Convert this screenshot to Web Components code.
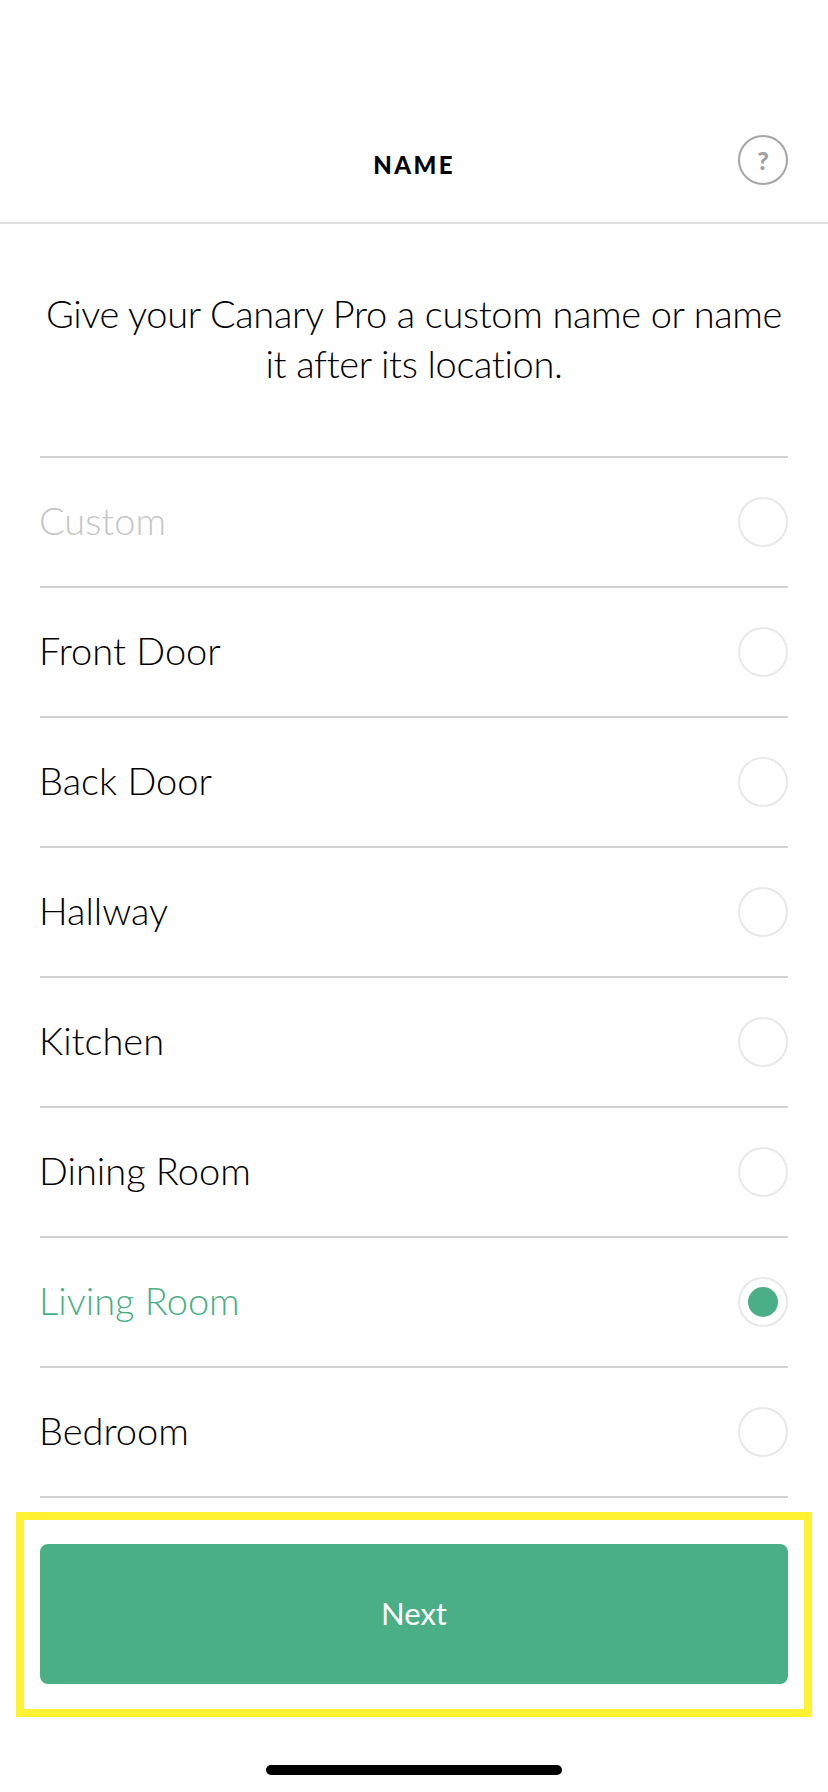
<!DOCTYPE html>
<html>
  <head>
    <meta charset="UTF-8" />
    <title>Name</title>
    <style>
      html, body { margin: 0; padding: 0; background: #fefefe; }
      body { font-family: "Lato", "Liberation Sans", sans-serif; color: #000; }
    </style>
    <script>
      // Barra superior con titulo y boton de ayuda
      class NameHeader extends HTMLElement {
        constructor() {
          super();
          const shadowRoot = this.attachShadow({ mode: "open" });
          shadowRoot.innerHTML = `
          <style>
            :host { display: block; }
            .bar {
              box-sizing: border-box;
              height: 224px;
              padding: 135px 40px 0 40px;
              display: grid;
              grid-template-columns: 50px 1fr 50px;
              align-items: start;
              border-bottom: 2px solid #e0e0e0;
            }
            h1 {
              grid-column: 2;
              margin: 5px 0 0 0;
              text-align: center;
              font: 900 24px/50px "Lato", sans-serif;
              letter-spacing: 2.4px;
              color: #000;
            }
            .help {
              box-sizing: border-box;
              width: 50px;
              height: 50px;
              border: 2px solid #a5a5a5;
              border-radius: 50%;
              display: flex;
              align-items: center;
              justify-content: center;
              font: 900 25px/1 "Lato", sans-serif;
              color: #a0a0a0;
            }
          </style>
          <div class="bar">
            <h1><slot></slot></h1>
            <div class="help">?</div>
          </div>`;
        }
      }
      customElements.define("name-header", NameHeader);

      // Una fila de la lista con su radio
      class NameOption extends HTMLElement {
        constructor() {
          super();
          const shadowRoot = this.attachShadow({ mode: "open" });
          shadowRoot.innerHTML = `
          <style>
            :host {
              display: flex;
              box-sizing: border-box;
              height: 130px;
              align-items: center;
              justify-content: space-between;
              border-bottom: 2px solid #d2d2d2;
              font: 300 38px/1 "Lato", sans-serif;
              color: #000;
            }
            :host([placeholder]) { color: #c6c6c6; }
            :host([selected]) { color: #4aaf86; }
            span { margin: 0 0 4px -1px; }
            .radio {
              box-sizing: border-box;
              width: 50px;
              height: 50px;
              border: 2px solid #e8e8e8;
              border-radius: 50%;
              display: flex;
              align-items: center;
              justify-content: center;
            }
            :host([selected]) .radio::after {
              content: "";
              width: 30px;
              height: 30px;
              border-radius: 50%;
              background: #4aaf86;
            }
          </style>
          <span><slot></slot></span>
          <div class="radio"></div>`;
        }
      }
      customElements.define("name-option", NameOption);

      // Contenedor de la lista, con la linea de arriba
      class NameList extends HTMLElement {
        constructor() {
          super();
          const shadowRoot = this.attachShadow({ mode: "open" });
          shadowRoot.innerHTML = `
          <style>
            :host {
              display: block;
              margin: 0 40px;
              border-top: 2px solid #d2d2d2;
            }
          </style>
          <slot></slot>`;
        }
      }
      customElements.define("name-list", NameList);

      // Boton verde dentro del recuadro amarillo
      class NextButton extends HTMLElement {
        constructor() {
          super();
          const shadowRoot = this.attachShadow({ mode: "open" });
          shadowRoot.innerHTML = `
          <style>
            :host {
              display: block;
              box-sizing: border-box;
              margin: 14px 16px 0 16px;
              padding: 24px 16px 25px 16px;
              height: 205px;
              border: 8px solid #fff233;
            }
            button {
              display: block;
              width: 100%;
              height: 140px;
              padding: 0 0 2px 0;
              border: none;
              border-radius: 8px;
              background: #4aaf86;
              color: #fff;
              font: 400 31px/1 "Lato", sans-serif;
            }
          </style>
          <button><slot></slot></button>`;
        }
      }
      customElements.define("next-button", NextButton);

      class HomeIndicator extends HTMLElement {
        constructor() {
          super();
          const shadowRoot = this.attachShadow({ mode: "open" });
          shadowRoot.innerHTML = `
          <style>
            :host {
              display: block;
              width: 296px;
              height: 10px;
              margin: 48px auto 0 auto;
              border-radius: 5px;
              background: #000;
            }
          </style>`;
        }
      }
      customElements.define("home-indicator", HomeIndicator);
    </script>
    <style>
      .prompt {
        margin: 0;
        padding: 64px 40px 68px 40px;
        text-align: center;
        font: 300 38px/50px "Lato", sans-serif;
        letter-spacing: -0.35px;
        color: #000;
      }
    </style>
  </head>
  <body>
    <name-header>NAME</name-header>
    <p class="prompt">Give your Canary Pro a custom name or name<br />it after its location.</p>
    <name-list>
      <name-option placeholder>Custom</name-option>
      <name-option>Front Door</name-option>
      <name-option>Back Door</name-option>
      <name-option>Hallway</name-option>
      <name-option>Kitchen</name-option>
      <name-option>Dining Room</name-option>
      <name-option selected>Living Room</name-option>
      <name-option>Bedroom</name-option>
    </name-list>
    <next-button>Next</next-button>
    <home-indicator></home-indicator>
  </body>
</html>
